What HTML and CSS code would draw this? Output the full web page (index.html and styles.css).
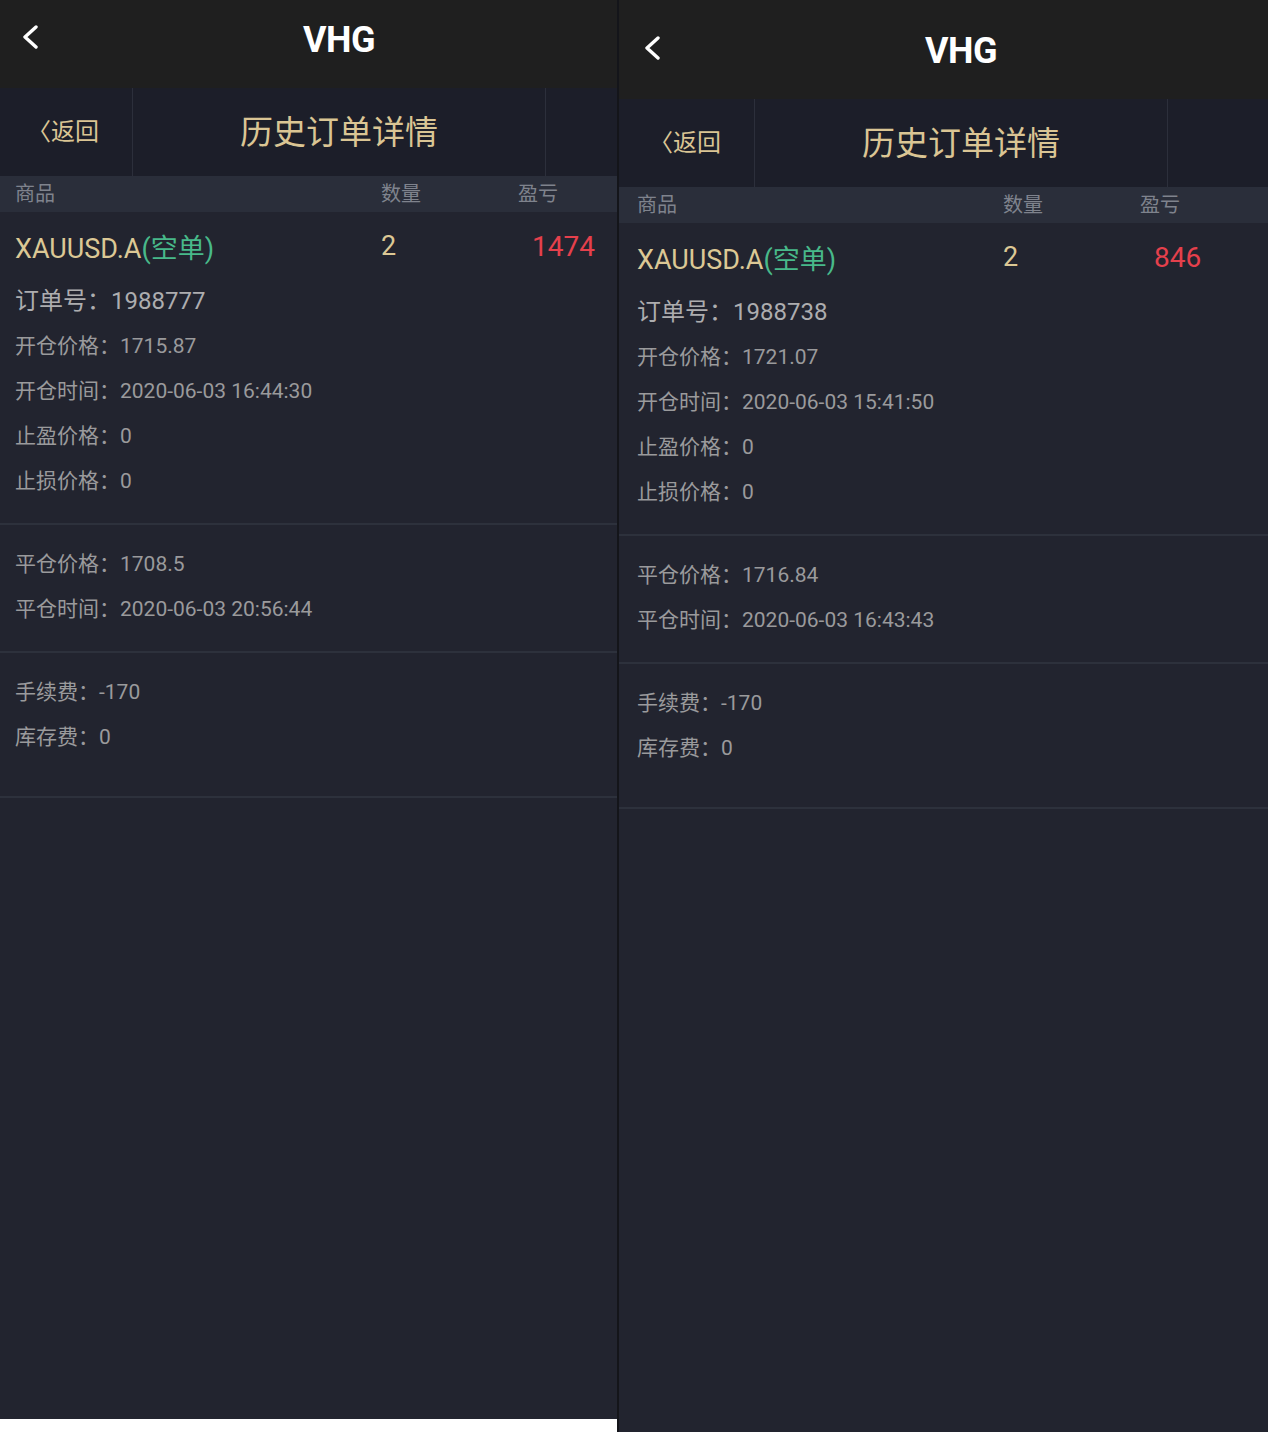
FILE: index.html
```html
<!DOCTYPE html>
<html lang="zh-CN">
<head>
<meta charset="utf-8">
<title>VHG 历史订单详情</title>
<link rel="stylesheet" href="styles.css">
</head>
<body>
<div class="page">
  <section class="phone phone-a">
    <header class="topbar">
      <div class="tb-back"><svg width="18" height="24" viewBox="0 0 18 24"><polyline points="15,2 4,12 15,22" fill="none" stroke="#fff" stroke-width="3.4" stroke-linecap="round" stroke-linejoin="round"/></svg></div>
      <div class="tb-title">VHG</div>
      <div></div>
    </header>
    <nav class="subbar">
      <div class="sb-back">〈返回</div>
      <div class="sb-title">历史订单详情</div>
      <div class="sb-right"></div>
    </nav>
    <div class="cols"><span>商品</span><span>数量</span><span>盈亏</span></div>
    <div class="block block-main">
      <div class="row"><span class="sym">XAUUSD.A<span class="side">(空单)</span></span><span class="qty">2</span><span class="pnl">1474</span></div>
      <p class="line line-id">订单号：1988777</p>
      <p class="line">开仓价格：1715.87</p>
      <p class="line">开仓时间：2020-06-03 16:44:30</p>
      <p class="line">止盈价格：0</p>
      <p class="line">止损价格：0</p>
    </div>
    <div class="block block-close">
      <p class="line">平仓价格：1708.5</p>
      <p class="line">平仓时间：2020-06-03 20:56:44</p>
    </div>
    <div class="block block-fee">
      <p class="line">手续费：-170</p>
      <p class="line">库存费：0</p>
    </div>
  </section>
  <div class="split"></div>
  <section class="phone phone-b">
    <header class="topbar">
      <div class="tb-back"><svg width="18" height="24" viewBox="0 0 18 24"><polyline points="15,2 4,12 15,22" fill="none" stroke="#fff" stroke-width="3.4" stroke-linecap="round" stroke-linejoin="round"/></svg></div>
      <div class="tb-title">VHG</div>
      <div></div>
    </header>
    <nav class="subbar">
      <div class="sb-back">〈返回</div>
      <div class="sb-title">历史订单详情</div>
      <div class="sb-right"></div>
    </nav>
    <div class="cols"><span>商品</span><span>数量</span><span>盈亏</span></div>
    <div class="block block-main">
      <div class="row"><span class="sym">XAUUSD.A<span class="side">(空单)</span></span><span class="qty">2</span><span class="pnl">846</span></div>
      <p class="line line-id">订单号：1988738</p>
      <p class="line">开仓价格：1721.07</p>
      <p class="line">开仓时间：2020-06-03 15:41:50</p>
      <p class="line">止盈价格：0</p>
      <p class="line">止损价格：0</p>
    </div>
    <div class="block block-close">
      <p class="line">平仓价格：1716.84</p>
      <p class="line">平仓时间：2020-06-03 16:43:43</p>
    </div>
    <div class="block block-fee">
      <p class="line">手续费：-170</p>
      <p class="line">库存费：0</p>
    </div>
  </section>
</div>
</body>
</html>
```
FILE: styles.css
```css
html, body {
  margin: 0;
  padding: 0;
  background: #ffffff;
}
body {
  font-family: Roboto, "Noto Sans CJK SC", sans-serif;
}
.page {
  display: flex;
  align-items: flex-start;
  width: 1268px;
  height: 1432px;
  overflow: hidden;
}
.phone {
  --inset: 0px;
  --top: 0px;
  display: flex;
  flex-direction: column;
  background: #22242f;
  overflow: hidden;
}
.phone-a {
  width: 617px;
  height: 1419px;
}
.phone-b {
  --inset: 3px;
  --top: 11px;
  flex: 1;
  height: 1432px;
}
.split {
  width: 2px;
  height: 1432px;
  background: #14151a;
  flex: none;
}

/* top bar */
.topbar {
  display: grid;
  grid-template-columns: 132px 414px 1fr;
  box-sizing: border-box;
  height: calc(88px + var(--top));
  padding-top: var(--top);
  padding-left: var(--inset);
  background: #1f1f1f;
}
.tb-back {
  padding: 25px 0 0 21px;
}
.tb-back svg {
  display: block;
}
.tb-title {
  height: 80px;
  line-height: 80px;
  text-align: center;
  color: #ffffff;
  font-size: 36px;
  font-weight: 700;
  letter-spacing: -0.5px;
}

/* sub header */
.subbar {
  display: grid;
  grid-template-columns: 132px 414px 1fr;
  height: 88px;
  padding-left: var(--inset);
  background: #1c1e29;
  color: #dac594;
}
.sb-back {
  display: flex;
  align-items: center;
  padding-left: 27px;
  padding-bottom: 5px;
  font-size: 24px;
}
.sb-title {
  display: flex;
  align-items: center;
  justify-content: center;
  padding-bottom: 5px;
  border-left: 1px solid #2c2f3b;
  border-right: 1px solid #2c2f3b;
  font-size: 33px;
}

/* column header */
.cols {
  display: grid;
  grid-template-columns: 366px 137px 1fr;
  height: 36px;
  line-height: 36px;
  padding-left: calc(15px + var(--inset));
  background: #2a2e3a;
  color: #7f838d;
  font-size: 20px;
}

/* blocks */
.block {
  border-bottom: 2px solid #2d313c;
  padding-left: calc(15px + var(--inset));
}
.block-main {
  padding-top: 12px;
  padding-bottom: 19px;
}
.block-close {
  padding-top: 17px;
  padding-bottom: 19px;
}
.block-fee {
  padding-top: 17px;
  padding-bottom: 36px;
}
.row {
  display: grid;
  grid-template-columns: 366px 151px 1fr;
  height: 44px;
  align-items: center;
  font-size: 27px;
  color: #dcc895;
}
.pnl {
  font-size: 28px;
}
.side {
  color: #48b98a;
}
.pnl {
  color: #e5404c;
}
.line {
  margin: 0;
  height: 45px;
  line-height: 45px;
  font-size: 21px;
  color: #9a9a9c;
  white-space: nowrap;
}
.line-id {
  margin-top: 11px;
  font-size: 24px;
  color: #adadaf;
}
```
